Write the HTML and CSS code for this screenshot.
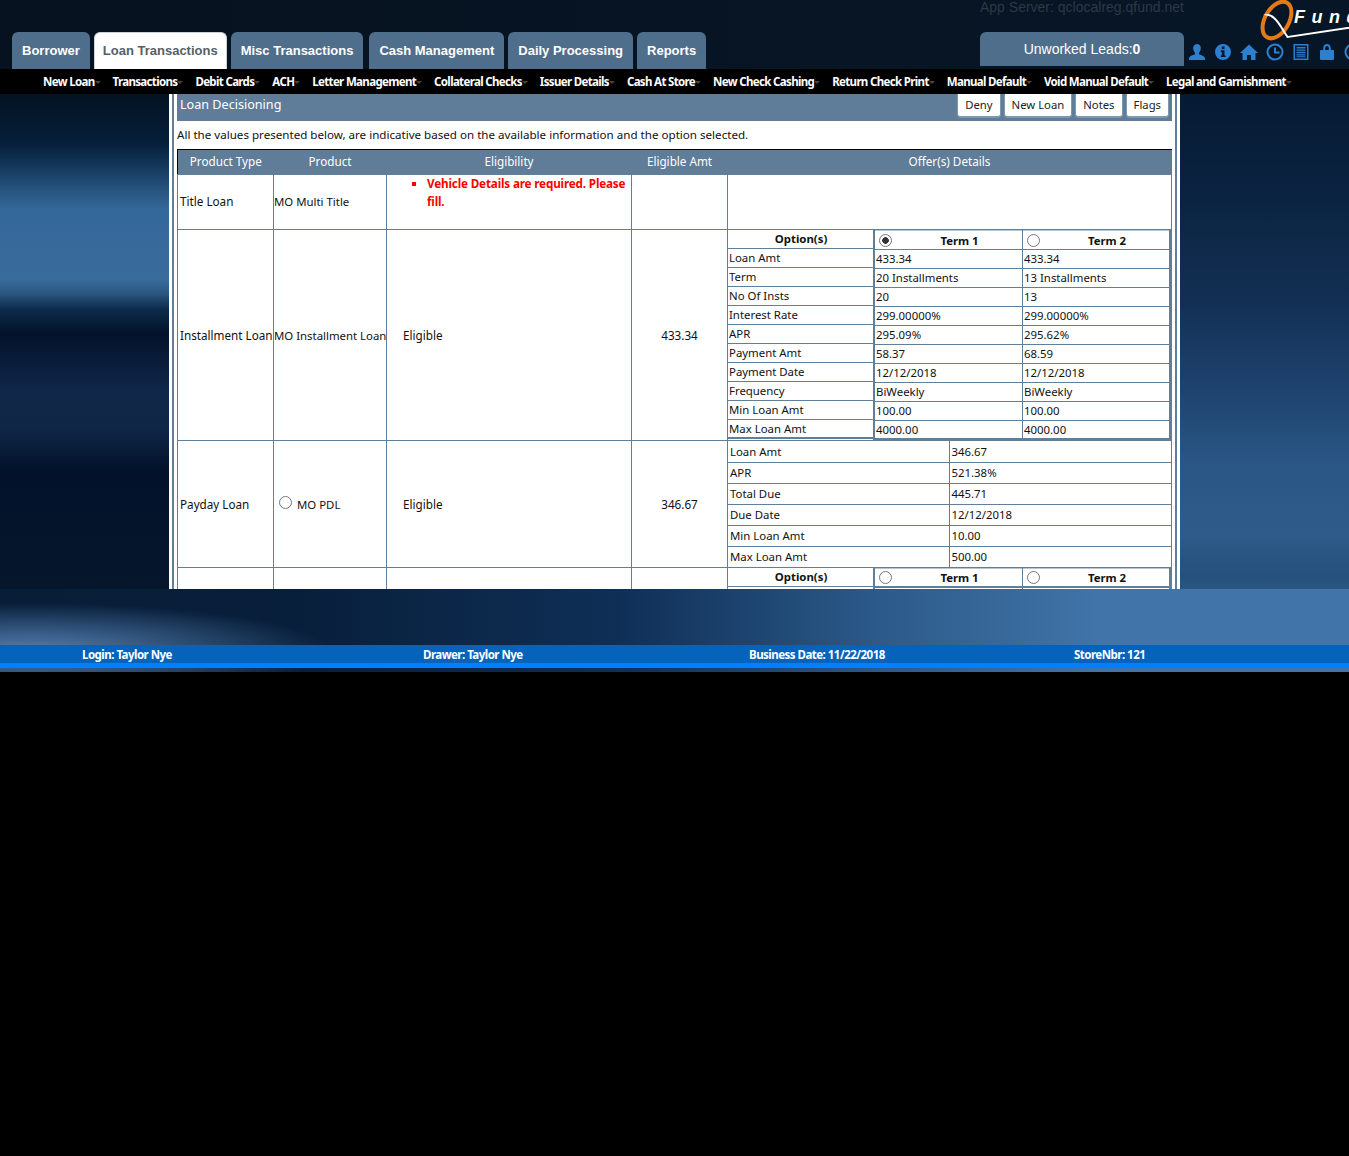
FILE: index.html
```html
<!DOCTYPE html>
<html lang="en">
<head>
<meta charset="utf-8">
<title>Loan Decisioning</title>
<link rel="stylesheet" href="styles.css">
</head>
<body>
<div class="screen">
  <header class="top">
    <nav class="tabs">
      <a class="tab">Borrower</a>
      <a class="tab active">Loan Transactions</a>
      <a class="tab">Misc Transactions</a>
      <a class="tab">Cash Management</a>
      <a class="tab">Daily Processing</a>
      <a class="tab">Reports</a>
    </nav>
    <div class="leads-col">
      <div class="app-server">App Server: qclocalreg.qfund.net</div>
      <div class="leads">Unworked Leads:<b>0</b></div>
    </div>
    <div class="icons">
      <svg class="ico" viewBox="0 0 18 18"><path d="M9 1c2.800 0 4 2.200 3.800 4.600-.2 2-1 3.400-1.800 4.200v1.400c2.600 1 5.500 1.600 6 3.800v2H1v-2c.5-2.200 3.400-2.800 6-3.800V9.800C6.200 9 5.400 7.600 5.200 5.600 5 3.200 6.200 1 9 1z"/></svg>
      <svg class="ico" viewBox="0 0 18 18"><path fill-rule="evenodd" d="M9 1a8 8 0 1 1 0 16A8 8 0 0 1 9 1zM7.800 3.500h2.700v2.500H7.800zM6.800 7.300h3.700v5.200h1v1.600H6.800v-1.600h1V8.900h-1z"/></svg>
      <svg class="ico" viewBox="0 0 18 18"><path d="M9 1.500L18 10h-2.500v7H11v-5H7v5H2.500v-7H0z"/></svg>
      <svg class="ico" viewBox="0 0 18 18"><path fill-rule="evenodd" d="M9 .5a8.500 8.500 0 1 1 0 17 8.500 8.500 0 0 1 0-17zM9 2.500a6.500 6.500 0 1 0 0 13 6.500 6.500 0 0 0 0-13zM8 4.500h2v4h3.500v2H8z"/></svg>
      <svg class="ico" viewBox="0 0 18 18"><path fill-rule="evenodd" d="M1.500 1h15v16h-15zM3 2.500v13h12v-13zM4.500 4H13.500v1.400H4.500zM4.500 6.400H13.500v1.400H4.500zM4.500 8.800H13.500v1.400H4.500zM4.500 11.200H13.500v1.400H4.500zM4.500 13.200H13.500v1H4.500z"/></svg>
      <svg class="ico" viewBox="0 0 18 18"><path fill-rule="evenodd" d="M9 1c2.400 0 3.800 1.800 3.800 4.200V7H15a1 1 0 0 1 1 1v8a1 1 0 0 1-1 1H3a1 1 0 0 1-1-1V8a1 1 0 0 1 1-1h2.200V5.200C5.200 2.800 6.600 1 9 1zM9 3C7.800 3 7.200 4 7.200 5.200V7h3.600V5.200C10.800 4 10.200 3 9 3z"/></svg>
      <svg class="ico" viewBox="0 0 18 18"><path fill-rule="evenodd" d="M9 .5a8.500 8.500 0 1 1 0 17 8.500 8.500 0 0 1 0-17zM9 2.500a6.500 6.500 0 1 0 0 13 6.500 6.500 0 0 0 0-13z"/></svg>
    </div>
    <svg class="logo" viewBox="0 0 110 46">
      <ellipse class="logo-ring" cx="19" cy="20" rx="12" ry="20" transform="rotate(30 19 20)"/>
      <path class="logo-swoosh" d="M5 15c8-3 13 2 18 10l7 11 80-12v2l-81 12-7-11c-5-8-9-12-17-12z"/>
      <text class="logo-text" x="36" y="23">Fund</text>
    </svg>
  </header>
  <nav class="subnav">
    <a class="sub">New Loan</a>
    <a class="sub">Transactions</a>
    <a class="sub">Debit Cards</a>
    <a class="sub">ACH</a>
    <a class="sub">Letter Management</a>
    <a class="sub">Collateral Checks</a>
    <a class="sub">Issuer Details</a>
    <a class="sub">Cash At Store</a>
    <a class="sub">New Check Cashing</a>
    <a class="sub">Return Check Print</a>
    <a class="sub">Manual Default</a>
    <a class="sub">Void Manual Default</a>
    <a class="sub">Legal and Garnishment</a>
  </nav>
  <main class="panel">
    <div class="panel-inner">
      <div class="title-bar">
        <span class="title">Loan Decisioning</span>
        <div class="actions">
          <button class="btn">Deny</button>
          <button class="btn">New Loan</button>
          <button class="btn">Notes</button>
          <button class="btn">Flags</button>
        </div>
      </div>
      <p class="note">All the values presented below, are indicative based on the available information and the option selected.</p>
      <table class="grid">
        <colgroup><col class="c1"><col class="c2"><col class="c3"><col class="c4"><col class="c5"></colgroup>
        <thead>
          <tr><th>Product Type</th><th>Product</th><th>Eligibility</th><th>Eligible Amt</th><th>Offer(s) Details</th></tr>
        </thead>
        <tbody>
          <tr class="r-title">
            <td>Title Loan</td><td class="prod">MO Multi Title</td>
            <td class="errcell"><ul class="errors"><li>Vehicle Details are required. Please fill.</li></ul></td>
            <td></td><td></td>
          </tr>
          <tr class="r-inst">
            <td>Installment Loan</td><td class="prod">MO Installment Loan</td>
            <td class="elig">Eligible</td><td class="amt">433.34</td>
            <td class="offer">
              <div class="terms">
                <div class="tcol opts">
                  <div class="o head">Option(s)</div>
                  <div class="o">Loan Amt</div><div class="o">Term</div><div class="o">No Of Insts</div><div class="o">Interest Rate</div><div class="o">APR</div><div class="o">Payment Amt</div><div class="o">Payment Date</div><div class="o">Frequency</div><div class="o">Min Loan Amt</div><div class="o">Max Loan Amt</div>
                </div>
                <div class="tcol">
                  <div class="o thead"><span class="radio on"></span><b>Term 1</b></div>
                  <div class="o">433.34</div><div class="o">20 Installments</div><div class="o">20</div><div class="o">299.00000%</div><div class="o">295.09%</div><div class="o">58.37</div><div class="o">12/12/2018</div><div class="o">BiWeekly</div><div class="o">100.00</div><div class="o">4000.00</div>
                </div>
                <div class="tcol">
                  <div class="o thead"><span class="radio"></span><b>Term 2</b></div>
                  <div class="o">433.34</div><div class="o">13 Installments</div><div class="o">13</div><div class="o">299.00000%</div><div class="o">295.62%</div><div class="o">68.59</div><div class="o">12/12/2018</div><div class="o">BiWeekly</div><div class="o">100.00</div><div class="o">4000.00</div>
                </div>
              </div>
            </td>
          </tr>
          <tr class="r-pay">
            <td>Payday Loan</td><td class="pdl"><span class="radio"></span>MO PDL</td>
            <td class="elig">Eligible</td><td class="amt">346.67</td>
            <td class="offer">
              <table class="pay">
                <tr><td>Loan Amt</td><td>346.67</td></tr>
                <tr><td>APR</td><td>521.38%</td></tr>
                <tr><td>Total Due</td><td>445.71</td></tr>
                <tr><td>Due Date</td><td>12/12/2018</td></tr>
                <tr><td>Min Loan Amt</td><td>10.00</td></tr>
                <tr><td>Max Loan Amt</td><td>500.00</td></tr>
              </table>
            </td>
          </tr>
          <tr class="r-inst">
            <td></td><td></td><td></td><td></td>
            <td class="offer">
              <div class="terms">
                <div class="tcol opts"><div class="o head">Option(s)</div><div class="o"></div></div>
                <div class="tcol"><div class="o thead"><span class="radio"></span><b>Term 1</b></div></div>
                <div class="tcol"><div class="o thead"><span class="radio"></span><b>Term 2</b></div></div>
              </div>
            </td>
          </tr>
        </tbody>
      </table>
    </div>
  </main>
  <footer class="foot">
    <span>Login: Taylor Nye</span>
    <span>Drawer: Taylor Nye</span>
    <span>Business Date: 11/22/2018</span>
    <span>StoreNbr: 121</span>
  </footer>
</div>
</body>
</html>
```
FILE: styles.css
```css
* { box-sizing: border-box; }
html, body { margin: 0; padding: 0; background: #000; overflow: hidden; }
body { height: 1156px; font-family: "Noto Sans", sans-serif; font-size: 11.7px; color: #111; }
.screen {
  position: relative; width: 1349px; height: 672px; overflow: hidden;
  background-color: #06142a;
  background-repeat: no-repeat;
  background-image:
    radial-gradient(ellipse 300px 48px at 30px 62px, rgba(95,145,200,.85) 0, rgba(95,145,200,.4) 55%, transparent 100%),
    linear-gradient(90deg, #081d38 0, #081f3b 300px, #0f2f56 620px, #2c5a8a 880px, #4174a8 1100px, #4174a8 1349px),
    linear-gradient(#041222 0, #051f3a 50px, #1a4168 80px, #35689a 115px, #396b9c 185px, #2a567f 200px, #0d2a4a 215px, #031229 240px, #10274a 296px, #0f2645 336px, #03122a 376px, #05162d 495px),
    linear-gradient(#051a33 0, #0b2442 110px, #133054 210px, #1f4470 300px, #2a5685 370px, #2e5b8a 440px, #26507c 480px, #2a5682 495px),
    linear-gradient(90deg, #06121f, #071627);
  background-size: 340px 83px, 100% 83px, 172px 495px, 171px 495px, 100% 94px;
  background-position: 0 589px, 0 589px, 0 94px, 1178px 94px, 0 0;
}
.top { position: relative; height: 69px; padding: 32px 0 0 12px; display: flex; }
.tabs { display: flex; gap: 4px; height: 37px; }
.tab {
  display: block; height: 37px; padding: 11px 10px 0; border-radius: 6px 6px 0 0;
  background: #4f6e8b; color: #fff; font: bold 13px/16px "Liberation Sans", sans-serif; white-space: nowrap;
}
.tab:nth-child(4) { margin-left: 2px; }
.tab.active { background: #fff; color: #555f66; border: 1px solid #c8d0d8; border-bottom: 0; padding: 10px 8px 0; }
.leads-col { position: absolute; left: 980px; top: 0; width: 204px; }
.app-server { height: 32px; color: #2c3946; font: 14px/15px "Liberation Sans", sans-serif; white-space: nowrap; }
.leads {
  height: 34px; background: #4f6e8b; border-radius: 6px 6px 0 0; color: #fff; text-align: center;
  font: 14px/34px "Liberation Sans", sans-serif;
}
.icons { position: absolute; left: 1188px; top: 43px; display: flex; gap: 8px; }
.ico { width: 18px; height: 18px; fill: #2d7fd0; display: block; }
.logo { position: absolute; left: 1258px; top: 0; width: 110px; height: 46px; overflow: hidden; }
.logo-ring { fill: none; stroke: #e47a16; stroke-width: 4; }
.logo-swoosh { fill: #fff; }
.logo-text { fill: #fff; font: italic bold 18px "Liberation Sans", sans-serif; letter-spacing: 6.5px; }
.subnav { height: 25px; background: #000; padding-left: 43px; display: flex; gap: 18px; }
.sub { color: #fff; font-weight: 700; font-size: 11.5px; line-height: 25px; letter-spacing: -.66px; white-space: nowrap; position: relative; }
.sub::after { content: ""; position: absolute; right: -6px; top: 12px; border: 3px solid transparent; border-top: 3px solid #444; }
.panel {
  margin-left: 169px; width: 1011px; height: 495px; overflow: hidden; background: #fff;
  border-left: 3px solid #fff; border-right: 3px solid #fff;
}
.panel-inner { height: 495px; border-left: 2px solid #5f7f9a; border-right: 2px solid #5f7f9a; padding: 0 3px; }
.title-bar { height: 27px; background: #5f7d98; display: flex; justify-content: space-between; padding: 0 3px; color: #fff; }
.title { font-size: 12.6px; line-height: 22px; }
.actions { display: flex; gap: 3px; height: 24px; }
.btn {
  height: 24px; width: auto; padding: 0 7px 2px; background: #fff; border: 1px solid #7d98b0; border-top: 0; border-bottom: 2px solid #7d98b0; border-radius: 0 0 4px 4px;
  font: 11.3px "Noto Sans", sans-serif; color: #222;
}
.note { margin: 0; height: 28px; padding-top: 6px; line-height: 16px; font-size: 11.6px; }
.grid { width: 994px; table-layout: fixed; border-collapse: collapse; border-top: 1px solid #000; border-left: 1px solid #000; }
.c1 { width: 96px; } .c2 { width: 113px; } .c3 { width: 245px; } .c4 { width: 96px; } .c5 { width: 444px; }
.grid th { height: 25px; background: #5f7d98; color: #fff; font-weight: 400; padding: 0 0 3px; text-align: center; }
.grid > tbody > tr > td { border: 1px solid #5f7f9a; padding: 0 0 0 2px; vertical-align: middle; white-space: nowrap; }
.r-title > td { height: 55px; }
.grid > tbody > .r-title > td { padding-bottom: 2px; }
.grid > tbody > tr > .prod { padding-left: 0; font-size: 11.4px; }
.r-inst > td { height: 211px; }
.r-pay > td { height: 127px; }
.grid > tbody > tr > .errcell { white-space: normal; vertical-align: top; padding: 0; }
.errors { margin: -1px 0 0; padding: 0 0 0 40px; color: #f00; font-weight: 700; line-height: 18px; list-style-type: square; letter-spacing: -.16px; }
.grid > tbody > tr > .elig { padding-left: 16px; }
.grid > tbody > tr > .amt { text-align: center; padding: 0; }
.grid > tbody > tr > .offer { padding: 0; vertical-align: top; }
.terms { display: flex; font-size: 11.4px; }
.tcol { width: 148px; border-left: 1px solid #5f7f9a; }
.tcol.opts { width: 146px; border-left: 0; border-right: 1px solid #5f7f9a; }
.tcol:last-child { border-right: 2px solid #5f7f9a; width: 149px; }
.o { height: 19px; line-height: 17px; border-bottom: 1px solid #5f7f9a; padding-left: 1px; white-space: nowrap; }
.tcol .o:last-child { border-bottom-width: 2px; }
.head { text-align: center; font-weight: 700; }
.o.thead { height: 20px; display: flex; align-items: center; padding-left: 4px; border-top: 1px solid #b9c5cf; border-bottom-width: 1px; }
.thead b { flex: 1; text-align: center; padding-left: 5px; }
.radio { display: inline-block; width: 13px; height: 13px; border: 1px solid #777; border-radius: 50%; background: #fff; flex: none; }
.radio.on { background: radial-gradient(circle, #333 0 3px, #fff 3.6px); }
.grid > tbody > tr > .pdl { padding-left: 5px; font-size: 11.4px; }
.pdl .radio { margin-right: 5px; vertical-align: 0; }
.pay { width: 100%; table-layout: fixed; border-collapse: collapse; font-size: 11.4px; }
.pay td { height: 21px; padding: 0 0 0 2px; border-bottom: 1px solid #5f7f9a; border-right: 1px solid #5f7f9a; }
.pay td:first-child { width: 221px; }
.pay td:last-child { border-right: 0; }
.pay tr:last-child td { border-bottom: 0; }
.foot {
  position: absolute; left: 0; top: 645px; width: 100%; height: 23px; background: #0563bb;
  border-bottom: 5px solid #0080ff; padding-left: 82px; display: grid; grid-template-columns: 341px 326px 325px 1fr;
  color: #fff; font-weight: 700; font-size: 11.5px; line-height: 19px; letter-spacing: -.52px;
}
```
